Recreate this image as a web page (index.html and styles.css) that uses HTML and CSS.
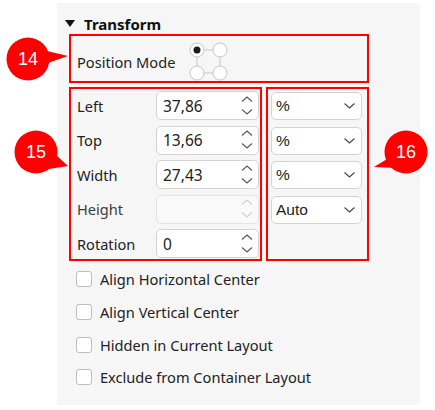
FILE: index.html
```html
<!DOCTYPE html>
<html>
<head>
<meta charset="utf-8">
<link rel="stylesheet" href="styles.css">
</head>
<body>
<div class="panel">
  <div class="header"><span class="caret"></span><span class="title">Transform</span></div>
  <div class="box mode-box">
    <span class="label">Position Mode</span>
    <svg class="mode-grid" width="40" height="40" viewBox="0 0 40 40">
      <g stroke="#c6c6c6" stroke-width="1" fill="none">
        <line x1="14.5" y1="8" x2="24.5" y2="8"/>
        <line x1="14.5" y1="31" x2="24.5" y2="31"/>
        <line x1="8" y1="14.5" x2="8" y2="24.5"/>
        <line x1="31" y1="14.5" x2="31" y2="24.5"/>
      </g>
      <g stroke="#c6c6c6" stroke-width="1" fill="#fff">
        <circle cx="8" cy="8" r="7"/>
        <circle cx="31" cy="8" r="7"/>
        <circle cx="8" cy="31" r="7"/>
        <circle cx="31" cy="31" r="7"/>
      </g>
      <circle cx="8" cy="8" r="3.5" fill="#1c1c1c"/>
    </svg>
  </div>
  <div class="fields">
    <div class="box dims">
      <span class="label">Left</span>
      <div class="spin"><span class="val">37,86</span><svg class="arrows" width="12" height="20" viewBox="0 0 12 20"><path d="M1 5.5 L6 1 L11 5.5 M1 13.5 L6 18 L11 13.5" fill="none" stroke="#555" stroke-width="1.1"/></svg></div>
      <span class="label">Top</span>
      <div class="spin"><span class="val">13,66</span><svg class="arrows" width="12" height="20" viewBox="0 0 12 20"><path d="M1 5.5 L6 1 L11 5.5 M1 13.5 L6 18 L11 13.5" fill="none" stroke="#555" stroke-width="1.1"/></svg></div>
      <span class="label">Width</span>
      <div class="spin"><span class="val">27,43</span><svg class="arrows" width="12" height="20" viewBox="0 0 12 20"><path d="M1 5.5 L6 1 L11 5.5 M1 13.5 L6 18 L11 13.5" fill="none" stroke="#555" stroke-width="1.1"/></svg></div>
      <span class="label dim">Height</span>
      <div class="spin disabled"><span class="val"></span><svg class="arrows" width="12" height="20" viewBox="0 0 12 20"><path d="M1 5.5 L6 1 L11 5.5 M1 13.5 L6 18 L11 13.5" fill="none" stroke="#cfcfcf" stroke-width="1.1"/></svg></div>
      <span class="label">Rotation</span>
      <div class="spin"><span class="val">0</span><svg class="arrows" width="12" height="20" viewBox="0 0 12 20"><path d="M1 5.5 L6 1 L11 5.5 M1 13.5 L6 18 L11 13.5" fill="none" stroke="#555" stroke-width="1.1"/></svg></div>
    </div>
    <div class="box units">
      <div class="select"><span>%</span><svg width="11" height="6" viewBox="0 0 11 6"><path d="M0.5 0.5 L5.5 5 L10.5 0.5" fill="none" stroke="#444" stroke-width="1.1"/></svg></div>
      <div class="select"><span>%</span><svg width="11" height="6" viewBox="0 0 11 6"><path d="M0.5 0.5 L5.5 5 L10.5 0.5" fill="none" stroke="#444" stroke-width="1.1"/></svg></div>
      <div class="select"><span>%</span><svg width="11" height="6" viewBox="0 0 11 6"><path d="M0.5 0.5 L5.5 5 L10.5 0.5" fill="none" stroke="#444" stroke-width="1.1"/></svg></div>
      <div class="select"><span>Auto</span><svg width="11" height="6" viewBox="0 0 11 6"><path d="M0.5 0.5 L5.5 5 L10.5 0.5" fill="none" stroke="#444" stroke-width="1.1"/></svg></div>
    </div>
  </div>
  <div class="checks">
    <label class="check"><span class="cb"></span>Align Horizontal Center</label>
    <label class="check"><span class="cb"></span>Align Vertical Center</label>
    <label class="check"><span class="cb"></span>Hidden in Current Layout</label>
    <label class="check"><span class="cb"></span>Exclude from Container Layout</label>
  </div>
</div>

<div class="badge b14">
  <svg width="70" height="50" viewBox="0 0 70 50"><path d="M42 17 L63 22 L43 29 Z" fill="#f00"/><circle cx="23" cy="25" r="21.5" fill="#f00"/></svg>
  <span class="num">14</span>
</div>
<div class="badge b15">
  <svg width="70" height="50" viewBox="0 0 70 50"><path d="M50 24 L63 36 L44 39 Z" fill="#f00"/><circle cx="31" cy="22" r="21.5" fill="#f00"/></svg>
  <span class="num">15</span>
</div>
<div class="badge b16">
  <svg width="70" height="50" viewBox="0 0 70 50"><path d="M22 26 L4 37 L26 38 Z" fill="#f00"/><circle cx="36" cy="22" r="21.5" fill="#f00"/></svg>
  <span class="num">16</span>
</div>
</body>
</html>
```

FILE: styles.css
```css
html, body {
  margin: 0;
  padding: 0;
  background: #fff;
}
body {
  font-family: "Noto Sans", "Open Sans", sans-serif;
  color: #222;
  position: relative;
  width: 435px;
  height: 410px;
  overflow: hidden;
}
.panel {
  margin: 3px 0 0 57px;
  width: 363px;
  height: 402px;
  box-sizing: border-box;
  background: #f6f6f6;
  padding: 10px 0 0 8px;
}
.header {
  display: flex;
  align-items: center;
  height: 21px;
}
.caret {
  width: 0;
  height: 0;
  border-left: 5.5px solid transparent;
  border-right: 5.5px solid transparent;
  border-top: 7px solid #111;
  margin-right: 9px;
}
.title {
  font-weight: 700;
  font-size: 15px;
  color: #111;
}
.box {
  border: 2px solid #f00;
  box-sizing: border-box;
}
.mode-box {
  margin-left: 4px;
  width: 300px;
  height: 49px;
  display: flex;
  align-items: center;
  padding: 6px 0 0 6px;
  gap: 14px;
}
.label {
  font-size: 14.6px;
  color: #222;
}
.label.dim {
  color: #3c3c3c;
}
.mode-grid {
  display: block;
}
.fields {
  display: flex;
  gap: 4px;
  margin: 4px 0 0 4px;
}
.dims {
  width: 193px;
  height: 174px;
  display: grid;
  grid-template-columns: 79px 103px;
  grid-auto-rows: 29px;
  row-gap: 5.5px;
  align-items: center;
  padding: 2px 1px 1px 6px;
}
.spin {
  height: 29px;
  box-sizing: border-box;
  background: #fff;
  border: 1px solid #d3d3d3;
  border-radius: 5px;
  display: flex;
  align-items: center;
  justify-content: space-between;
  padding: 0 5px 0 6px;
}
.spin.disabled {
  background: #f9f9f9;
  border-color: #e3e3e3;
}
.val {
  font-size: 15.5px;
  color: #222;
}
.arrows {
  display: block;
}
.units {
  width: 103px;
  height: 174px;
  display: flex;
  flex-direction: column;
  gap: 6.5px;
  padding: 3px 5px 0 3px;
}
.select {
  height: 28px;
  box-sizing: border-box;
  background: #fff;
  border: 1px solid #d3d3d3;
  border-radius: 5px;
  display: flex;
  align-items: center;
  justify-content: space-between;
  padding: 0 6px 0 4px;
  font-family: "Liberation Sans", Arial, sans-serif;
  font-size: 15.5px;
  color: #222;
}
.select svg {
  display: block;
}
.checks {
  margin-top: 2px;
  padding-left: 11px;
  display: flex;
  flex-direction: column;
}
.check {
  height: 32.7px;
  display: flex;
  align-items: center;
  font-size: 14.6px;
  color: #222;
}
.cb {
  width: 16px;
  height: 16px;
  box-sizing: border-box;
  border: 1px solid #bdbdbd;
  border-radius: 3px;
  background: #fff;
  margin-right: 8px;
}
.badge {
  position: absolute;
  width: 70px;
  height: 50px;
}
.badge svg {
  position: absolute;
  left: 0;
  top: 0;
}
.badge .num {
  position: absolute;
  top: 0;
  height: 44px;
  width: 42px;
  display: flex;
  align-items: center;
  justify-content: center;
  font-family: "Liberation Sans", Arial, sans-serif;
  font-size: 18px;
  color: #fff;
}
.b14 { left: 5px; top: 34px; }
.b14 .num { left: 2px; top: 3px; }
.b15 { left: 5px; top: 130px; }
.b15 .num { left: 10px; }
.b16 { left: 370px; top: 130px; }
.b16 .num { left: 15px; }
```
